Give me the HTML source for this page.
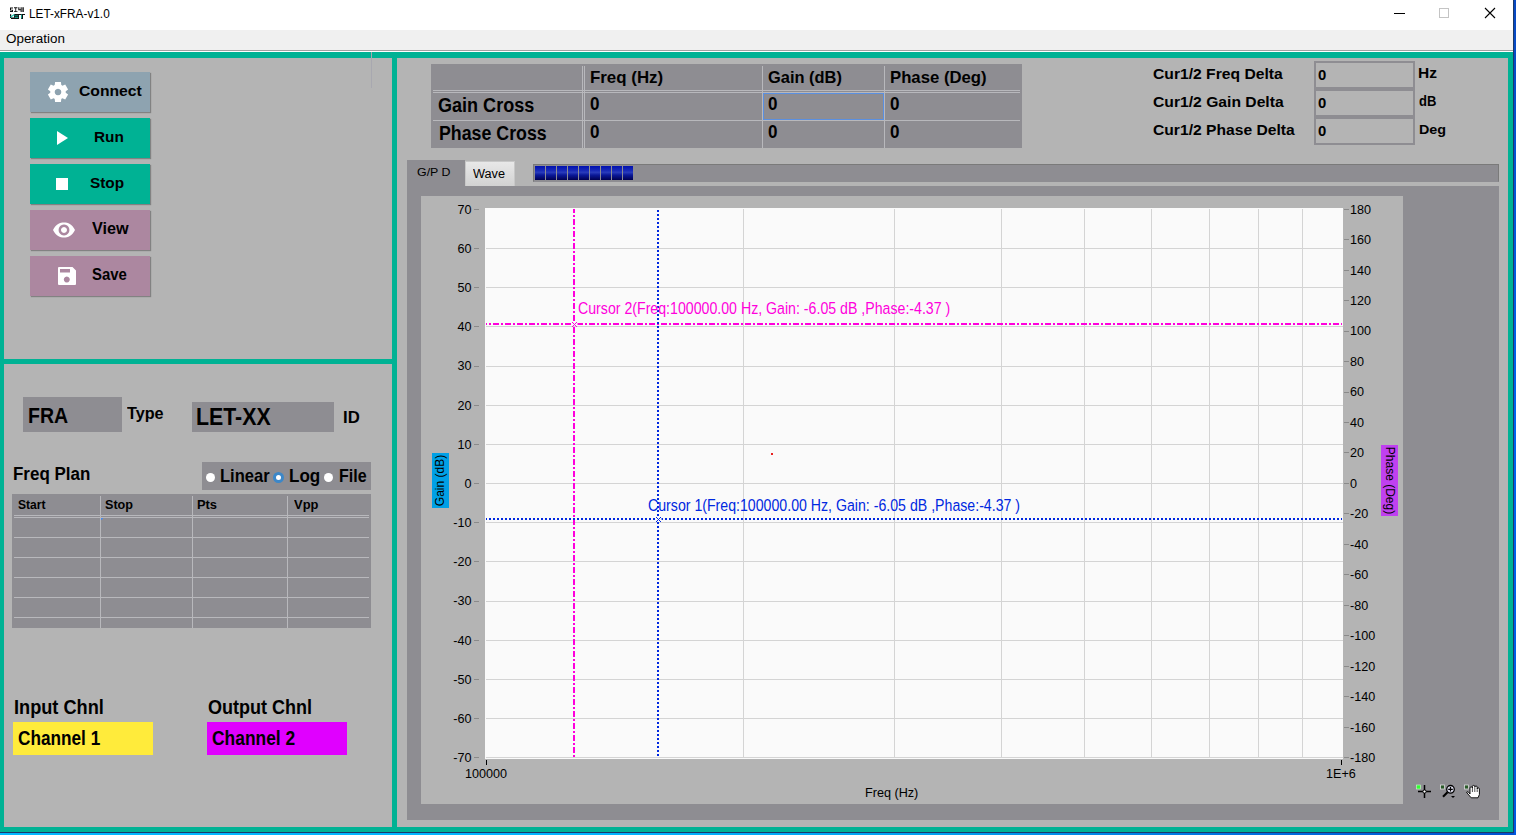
<!DOCTYPE html>
<html><head><meta charset="utf-8"><style>
html,body{margin:0;padding:0;width:1516px;height:835px;overflow:hidden;background:#0a5ad0}
body>div,body>svg{position:absolute}
.t{position:absolute;white-space:pre;line-height:1;font-family:"Liberation Sans",sans-serif;transform-origin:0 0}
svg{position:absolute;overflow:visible}
</style></head><body>
<div style="left:0px;top:0px;width:1516px;height:835px;background:#0a5ad0;"></div>
<div style="left:0px;top:833px;width:1516px;height:2px;background:linear-gradient(to right,#00b8ff 0%,#00b4ff 40%,#00a0f0 62%,#0070e0 82%,#0050d0 100%);"></div>
<div style="left:1514px;top:0px;width:2px;height:835px;background:linear-gradient(#0848c0,#0064f0 50%,#0058e0 100%);"></div>
<div style="left:0px;top:0px;width:1513px;height:30px;background:#ffffff;"></div>
<div style="left:0px;top:30px;width:1513px;height:20px;background:#f0f0f0;"></div>
<div style="left:0px;top:50px;width:1513px;height:1px;background:#a0a0a0;"></div>
<div style="left:0px;top:51px;width:1513px;height:1px;background:#ffffff;"></div>
<div style="left:1513px;top:0px;width:1px;height:833px;background:#1a3a6a;"></div>
<div style="left:0px;top:832px;width:1514px;height:1px;background:#1a3a6a;"></div>
<div style="left:0px;top:52px;width:1513px;height:780px;background:#00b294;"></div>
<div style="left:4px;top:58px;width:388px;height:301px;background:#b4b4b4;"></div>
<div style="left:4px;top:364px;width:388px;height:463px;background:#b4b4b4;"></div>
<div style="left:397px;top:58px;width:1111px;height:769px;background:#b4b4b4;"></div>
<svg style="left:9px;top:6px" width="17" height="14" viewBox="0 0 17 14">
<path d="M1 1.5h3v1h-2v1.2h2v2.3H1v-1h2v-0.6H1zM5 1.2h3.4v1H7.2v3h1.3v0.8H5V5.2h1.3v-3H5zM9.3 1.2h1.1v2h1.2v-2h1.1v4.8h-1.1V4.2h-2.3zM13.4 1.2h1.4v4.8h-1.4z" fill="#111"/>
<path d="M5 8h11v1.1H5zM1 8.3h1.2v3.6H1zM2 11.6h8v1.5H2zM5 9h5v2.6H5zM12 8.5h2v4.6h-2z" fill="#111"/>
<path d="M1 10.8L5 8.1l0.9 0.7-3.8 2.8z" fill="#1fc8b0"/><path d="M5.6 9.6h3.6v0.7H5.6zM5.6 10.9h3.6v0.8H5.6zM12 8.5h0.8v4H12z" fill="#1fc8b0"/>
</svg>
<div class="t" id="t0" style="left:29.23px;top:6.75px;font-size:13.52px;font-weight:400;color:#000;transform:scaleX(0.8736);">LET-xFRA-v1.0</div>
<div style="left:1394px;top:13px;width:11px;height:1px;background:#000;"></div>
<div style="left:1439px;top:8px;width:10px;height:10px;background:transparent;border:1px solid #c4c4c4;box-sizing:border-box"></div>
<svg style="left:1484px;top:7px" width="12" height="12" viewBox="0 0 12 12"><path d="M1 1L11 11M11 1L1 11" stroke="#000" stroke-width="1.1"/></svg>
<div class="t" id="t1" style="left:6.07px;top:31.80px;font-size:13.23px;font-weight:400;color:#000;transform:scaleX(1.0154);">Operation</div>
<div style="left:371px;top:52px;width:1px;height:36px;background:#a8a8b0;"></div>
<div style="left:30px;top:72px;width:120px;height:40px;background:#8ea3b0;box-shadow:1px 1px 1px rgba(0,0,0,0.28)"></div>
<svg style="left:48px;top:82px" width="20" height="20" viewBox="0 0 20 20"><path fill="#fff" fill-rule="evenodd" d="M13.30 3.00L12.90 0.00L7.10 -0.00L6.70 3.00A7.0 7.0 0 0 0 5.59 3.64L2.79 2.49L-0.11 7.51L2.29 9.36A7.0 7.0 0 0 0 2.29 10.64L-0.11 12.49L2.79 17.51L5.59 16.36A7.0 7.0 0 0 0 6.70 17.00L7.10 20.00L12.90 20.00L13.30 17.00A7.0 7.0 0 0 0 14.41 16.36L17.21 17.51L20.11 12.49L17.71 10.64A7.0 7.0 0 0 0 17.71 9.36L20.11 7.51L17.21 2.49L14.41 3.64A7.0 7.0 0 0 0 13.30 3.00ZM10 6.7a3.3 3.3 0 1 0 0.001 0z"/></svg>
<div style="left:30px;top:118px;width:120px;height:40px;background:#00b294;box-shadow:1px 1px 1px rgba(0,0,0,0.28)"></div>
<svg style="left:57px;top:131px" width="12" height="15" viewBox="0 0 12 15"><path d="M0 0L11 7L0 14z" fill="#fff"/></svg>
<div style="left:30px;top:164px;width:120px;height:40px;background:#00b294;box-shadow:1px 1px 1px rgba(0,0,0,0.28)"></div>
<div style="left:56px;top:178px;width:12px;height:12px;background:#fff"></div>
<div style="left:30px;top:210px;width:120px;height:40px;background:#ac87a0;box-shadow:1px 1px 1px rgba(0,0,0,0.28)"></div>
<svg style="left:53px;top:222px" width="22" height="16" viewBox="0 0 22 16"><path fill="#fff" fill-rule="evenodd" d="M0 8C3 2 7 0.5 11 0.5S19 2 22 8C19 14 15 15.5 11 15.5S3 14 0 8z M11 2.6a5.4 5.4 0 1 0 0.01 0z M11 5a3 3 0 1 1-0.01 0z"/></svg>
<div style="left:30px;top:256px;width:120px;height:40px;background:#ac87a0;box-shadow:1px 1px 1px rgba(0,0,0,0.28)"></div>
<svg style="left:58px;top:267px" width="18" height="18" viewBox="0 0 18 18"><path fill="#fff" fill-rule="evenodd" d="M1 0H14.5L18 3.5V17a1 1 0 0 1-1 1H1a1 1 0 0 1-1-1V1a1 1 0 0 1 1-1z M2 2V5.5H12V2z M8.8 9.6a3 3 0 1 0 0.01 0z"/></svg>
<div class="t" id="t2" style="left:78.61px;top:82.75px;font-size:15.41px;font-weight:700;color:#000;transform:scaleX(1.0185);">Connect</div>
<div class="t" id="t3" style="left:93.84px;top:128.83px;font-size:15.55px;font-weight:700;color:#000;transform:scaleX(0.9892);">Run</div>
<div class="t" id="t4" style="left:90.46px;top:175.08px;font-size:15.26px;font-weight:700;color:#000;transform:scaleX(1.0070);">Stop</div>
<div class="t" id="t5" style="left:92.30px;top:220.87px;font-size:16.57px;font-weight:700;color:#000;transform:scaleX(0.9782);">View</div>
<div class="t" id="t6" style="left:92.17px;top:267.36px;font-size:15.99px;font-weight:700;color:#000;transform:scaleX(0.9321);">Save</div>
<div style="left:23px;top:397px;width:99px;height:35px;background:#8e8d92;"></div>
<div class="t" id="t7" style="left:28.38px;top:405.42px;font-size:21.95px;font-weight:700;color:#000;transform:scaleX(0.8911);">FRA</div>
<div class="t" id="t8" style="left:127.10px;top:405.09px;font-size:16.42px;font-weight:700;color:#000;transform:scaleX(0.9862);">Type</div>
<div style="left:192px;top:402px;width:142px;height:30px;background:#8e8d92;"></div>
<div class="t" id="t9" style="left:196.47px;top:406.21px;font-size:23.26px;font-weight:700;color:#000;transform:scaleX(0.9167);">LET-XX</div>
<div class="t" id="t10" style="left:342.95px;top:410.46px;font-size:15.99px;font-weight:700;color:#000;transform:scaleX(1.0461);">ID</div>
<div class="t" id="t11" style="left:12.84px;top:466.13px;font-size:17.44px;font-weight:700;color:#000;transform:scaleX(0.9723);">Freq Plan</div>
<div style="left:202px;top:462px;width:169px;height:28px;background:#8e8d92;"></div>
<div style="left:205.6px;top:472.7px;width:9.8px;height:9.6px;border-radius:50%;background:#fff"></div>
<div style="left:272.7px;top:471.8px;width:11.3px;height:11.3px;border-radius:50%;background:#fff;border:3.2px solid #3c87c8;box-sizing:border-box"></div>
<div style="left:323.9px;top:472.7px;width:9.6px;height:9.6px;border-radius:50%;background:#fff"></div>
<div class="t" id="t12" style="left:220.07px;top:466.84px;font-size:18.02px;font-weight:700;color:#000;transform:scaleX(0.9183);">Linear</div>
<div class="t" id="t13" style="left:288.93px;top:466.84px;font-size:18.02px;font-weight:700;color:#000;transform:scaleX(0.9464);">Log</div>
<div class="t" id="t14" style="left:338.90px;top:466.84px;font-size:18.02px;font-weight:700;color:#000;transform:scaleX(0.8889);">File</div>
<div style="left:12px;top:494px;width:359px;height:134px;background:#8e8d92;"></div>
<div style="left:100px;top:496px;width:1px;height:132px;background:#b8b8bc;"></div>
<div style="left:192px;top:496px;width:1px;height:132px;background:#b8b8bc;"></div>
<div style="left:287px;top:496px;width:1px;height:132px;background:#b8b8bc;"></div>
<div style="left:14px;top:515px;width:355px;height:1px;background:#b8b8bc;"></div>
<div style="left:14px;top:517px;width:355px;height:1px;background:#b8b8bc;"></div>
<div style="left:14px;top:537px;width:355px;height:1px;background:#b8b8bc;"></div>
<div style="left:14px;top:557px;width:355px;height:1px;background:#b8b8bc;"></div>
<div style="left:14px;top:577px;width:355px;height:1px;background:#b8b8bc;"></div>
<div style="left:14px;top:597px;width:355px;height:1px;background:#b8b8bc;"></div>
<div style="left:14px;top:617px;width:355px;height:1px;background:#b8b8bc;"></div>
<div style="left:101px;top:518px;width:2px;height:1px;background:#4a8ae8;"></div>
<div style="left:101px;top:518px;width:1px;height:2px;background:#4a8ae8;"></div>
<div class="t" id="t15" style="left:18.36px;top:499.49px;font-size:12.65px;font-weight:700;color:#000;transform:scaleX(0.9562);">Start</div>
<div class="t" id="t16" style="left:105.40px;top:499.49px;font-size:12.65px;font-weight:700;color:#000;transform:scaleX(0.9970);">Stop</div>
<div class="t" id="t17" style="left:197.25px;top:498.62px;font-size:12.50px;font-weight:700;color:#000;transform:scaleX(1.0295);">Pts</div>
<div class="t" id="t18" style="left:294.20px;top:498.62px;font-size:12.50px;font-weight:700;color:#000;transform:scaleX(1.0345);">Vpp</div>
<div class="t" id="t19" style="left:13.56px;top:698.31px;font-size:19.48px;font-weight:700;color:#000;transform:scaleX(0.9339);">Input Chnl</div>
<div style="left:13px;top:722px;width:140px;height:33px;background:#ffeb3b;"></div>
<div class="t" id="t20" style="left:18.16px;top:727.89px;font-size:20.20px;font-weight:700;color:#000;transform:scaleX(0.8521);">Channel 1</div>
<div class="t" id="t21" style="left:208.34px;top:698.31px;font-size:19.48px;font-weight:700;color:#000;transform:scaleX(0.9256);">Output Chnl</div>
<div style="left:207px;top:722px;width:140px;height:33px;background:#e000ff;"></div>
<div class="t" id="t22" style="left:212.36px;top:727.89px;font-size:20.20px;font-weight:700;color:#000;transform:scaleX(0.8625);">Channel 2</div>
<div style="left:431px;top:64px;width:591px;height:84px;background:#8e8d92;"></div>
<div style="left:582px;top:66px;width:1px;height:82px;background:#b8b8bc;"></div>
<div style="left:584px;top:66px;width:1px;height:82px;background:#b8b8bc;"></div>
<div style="left:762px;top:66px;width:1px;height:82px;background:#b8b8bc;"></div>
<div style="left:884px;top:66px;width:1px;height:82px;background:#b8b8bc;"></div>
<div style="left:433px;top:90px;width:587px;height:1px;background:#b8b8bc;"></div>
<div style="left:433px;top:92px;width:587px;height:1px;background:#b8b8bc;"></div>
<div style="left:433px;top:120px;width:587px;height:1px;background:#b8b8bc;"></div>
<div style="left:763px;top:93px;width:121px;height:27px;background:transparent;border:1px solid #5a8fe0;box-sizing:border-box"></div>
<div class="t" id="t23" style="left:589.64px;top:69.38px;font-size:17.15px;font-weight:700;color:#000;transform:scaleX(0.9845);">Freq (Hz)</div>
<div class="t" id="t24" style="left:768.19px;top:69.38px;font-size:17.15px;font-weight:700;color:#000;transform:scaleX(0.9577);">Gain (dB)</div>
<div class="t" id="t25" style="left:889.55px;top:69.38px;font-size:17.15px;font-weight:700;color:#000;transform:scaleX(0.9750);">Phase (Deg)</div>
<div class="t" id="t26" style="left:438.44px;top:94.65px;font-size:20.49px;font-weight:700;color:#000;transform:scaleX(0.8807);">Gain Cross</div>
<div class="t" id="t27" style="left:438.79px;top:124.10px;font-size:19.84px;font-weight:700;color:#000;transform:scaleX(0.8962);">Phase Cross</div>
<div class="t" id="t28" style="left:590.47px;top:96.13px;font-size:17.44px;font-weight:700;color:#000;transform:scaleX(0.9765);">0</div>
<div class="t" id="t29" style="left:590.47px;top:124.23px;font-size:17.44px;font-weight:700;color:#000;transform:scaleX(0.9765);">0</div>
<div class="t" id="t30" style="left:768.17px;top:96.13px;font-size:17.44px;font-weight:700;color:#000;transform:scaleX(0.9765);">0</div>
<div class="t" id="t31" style="left:768.17px;top:124.23px;font-size:17.44px;font-weight:700;color:#000;transform:scaleX(0.9765);">0</div>
<div class="t" id="t32" style="left:890.07px;top:96.13px;font-size:17.44px;font-weight:700;color:#000;transform:scaleX(0.9765);">0</div>
<div class="t" id="t33" style="left:890.07px;top:124.23px;font-size:17.44px;font-weight:700;color:#000;transform:scaleX(0.9765);">0</div>
<div style="left:1314px;top:61px;width:101px;height:28px;background:#b4b4b4;border:2px solid #8e8d92;box-sizing:border-box"></div>
<div style="left:1314px;top:89px;width:101px;height:28px;background:#b4b4b4;border:2px solid #8e8d92;box-sizing:border-box"></div>
<div style="left:1314px;top:117px;width:101px;height:28px;background:#b4b4b4;border:2px solid #8e8d92;box-sizing:border-box"></div>
<div class="t" id="t34" style="left:1152.66px;top:65.95px;font-size:15.41px;font-weight:700;color:#000;transform:scaleX(1.0166);">Cur1/2 Freq Delta</div>
<div class="t" id="t35" style="left:1152.66px;top:94.43px;font-size:15.55px;font-weight:700;color:#000;transform:scaleX(1.0081);">Cur1/2 Gain Delta</div>
<div class="t" id="t36" style="left:1152.71px;top:122.43px;font-size:15.55px;font-weight:700;color:#000;transform:scaleX(1.0063);">Cur1/2 Phase Delta</div>
<div class="t" id="t37" style="left:1318.34px;top:68.49px;font-size:14.54px;font-weight:700;color:#000;transform:scaleX(1.0227);">0</div>
<div class="t" id="t38" style="left:1318.34px;top:96.29px;font-size:14.54px;font-weight:700;color:#000;transform:scaleX(1.0227);">0</div>
<div class="t" id="t39" style="left:1318.34px;top:123.59px;font-size:14.54px;font-weight:700;color:#000;transform:scaleX(1.0227);">0</div>
<div class="t" id="t40" style="left:1418.18px;top:65.94px;font-size:14.24px;font-weight:700;color:#000;transform:scaleX(1.0887);">Hz</div>
<div class="t" id="t41" style="left:1419.29px;top:93.74px;font-size:14.24px;font-weight:700;color:#000;transform:scaleX(0.9142);">dB</div>
<div class="t" id="t42" style="left:1418.80px;top:123.25px;font-size:13.52px;font-weight:700;color:#000;transform:scaleX(1.0618);">Deg</div>
<div style="left:407px;top:160px;width:58px;height:26px;background:#8e8d92;"></div>
<div style="left:465px;top:161px;width:50px;height:25px;background:linear-gradient(#e8e8e8,#d2d2d2);border:1px solid #c8c8c8;border-bottom:none;box-sizing:border-box"></div>
<div class="t" id="t43" style="left:417.02px;top:165.75px;font-size:11.63px;font-weight:400;color:#000;transform:scaleX(1.0648);">G/P D</div>
<div class="t" id="t44" style="left:472.80px;top:166.60px;font-size:13.23px;font-weight:400;color:#000;transform:scaleX(0.9609);">Wave</div>
<div style="left:533px;top:164px;width:966px;height:18px;background:#8e8d92;border:1px solid #7a7a7a;border-bottom-color:#8e8d92;box-sizing:border-box"></div>
<div style="left:535px;top:166px;width:10px;height:14px;background:linear-gradient(#0010b0 0%,#1a2cb8 35%,#2a3cbc 45%,#0a1898 65%,#000050 100%);"></div>
<div style="left:546px;top:166px;width:10px;height:14px;background:linear-gradient(#0010b0 0%,#1a2cb8 35%,#2a3cbc 45%,#0a1898 65%,#000050 100%);"></div>
<div style="left:557px;top:166px;width:10px;height:14px;background:linear-gradient(#0010b0 0%,#1a2cb8 35%,#2a3cbc 45%,#0a1898 65%,#000050 100%);"></div>
<div style="left:568px;top:166px;width:10px;height:14px;background:linear-gradient(#0010b0 0%,#1a2cb8 35%,#2a3cbc 45%,#0a1898 65%,#000050 100%);"></div>
<div style="left:579px;top:166px;width:10px;height:14px;background:linear-gradient(#0010b0 0%,#1a2cb8 35%,#2a3cbc 45%,#0a1898 65%,#000050 100%);"></div>
<div style="left:590px;top:166px;width:10px;height:14px;background:linear-gradient(#0010b0 0%,#1a2cb8 35%,#2a3cbc 45%,#0a1898 65%,#000050 100%);"></div>
<div style="left:601px;top:166px;width:10px;height:14px;background:linear-gradient(#0010b0 0%,#1a2cb8 35%,#2a3cbc 45%,#0a1898 65%,#000050 100%);"></div>
<div style="left:612px;top:166px;width:10px;height:14px;background:linear-gradient(#0010b0 0%,#1a2cb8 35%,#2a3cbc 45%,#0a1898 65%,#000050 100%);"></div>
<div style="left:623px;top:166px;width:10px;height:14px;background:linear-gradient(#0010b0 0%,#1a2cb8 35%,#2a3cbc 45%,#0a1898 65%,#000050 100%);"></div>
<div style="left:407px;top:186px;width:1092px;height:634px;background:#8e8d92;"></div>
<div style="left:421px;top:196px;width:982px;height:608px;background:#b4b4b4;"></div>
<div style="left:485px;top:208px;width:858px;height:551px;background:#fafafa;"></div>
<div style="left:743px;top:209px;width:1px;height:549px;background:#d4d4d4;"></div>
<div style="left:894px;top:209px;width:1px;height:549px;background:#d4d4d4;"></div>
<div style="left:1001px;top:209px;width:1px;height:549px;background:#d4d4d4;"></div>
<div style="left:1084px;top:209px;width:1px;height:549px;background:#d4d4d4;"></div>
<div style="left:1151px;top:209px;width:1px;height:549px;background:#d4d4d4;"></div>
<div style="left:1209px;top:209px;width:1px;height:549px;background:#d4d4d4;"></div>
<div style="left:1258px;top:209px;width:1px;height:549px;background:#d4d4d4;"></div>
<div style="left:1302px;top:209px;width:1px;height:549px;background:#d4d4d4;"></div>
<div style="left:486px;top:248px;width:857px;height:1px;background:#d4d4d4;"></div>
<div style="left:486px;top:287px;width:857px;height:1px;background:#d4d4d4;"></div>
<div style="left:486px;top:326px;width:857px;height:1px;background:#d4d4d4;"></div>
<div style="left:486px;top:366px;width:857px;height:1px;background:#d4d4d4;"></div>
<div style="left:486px;top:405px;width:857px;height:1px;background:#d4d4d4;"></div>
<div style="left:486px;top:444px;width:857px;height:1px;background:#d4d4d4;"></div>
<div style="left:486px;top:483px;width:857px;height:1px;background:#d4d4d4;"></div>
<div style="left:486px;top:522px;width:857px;height:1px;background:#d4d4d4;"></div>
<div style="left:486px;top:561px;width:857px;height:1px;background:#d4d4d4;"></div>
<div style="left:486px;top:601px;width:857px;height:1px;background:#d4d4d4;"></div>
<div style="left:486px;top:640px;width:857px;height:1px;background:#d4d4d4;"></div>
<div style="left:486px;top:679px;width:857px;height:1px;background:#d4d4d4;"></div>
<div style="left:486px;top:718px;width:857px;height:1px;background:#d4d4d4;"></div>
<div style="left:486px;top:757px;width:857px;height:1px;background:#d4d4d4;"></div>
<div style="left:474px;top:209px;width:5px;height:1px;background:#8a8a8a;"></div>
<div class="t" style="right:1044.5px;top:203.60px;font-size:12.6px;font-weight:400;color:#000;">70</div>
<div style="left:474px;top:248px;width:5px;height:1px;background:#8a8a8a;"></div>
<div class="t" style="right:1044.5px;top:242.78px;font-size:12.6px;font-weight:400;color:#000;">60</div>
<div style="left:474px;top:287px;width:5px;height:1px;background:#8a8a8a;"></div>
<div class="t" style="right:1044.5px;top:281.96px;font-size:12.6px;font-weight:400;color:#000;">50</div>
<div style="left:474px;top:326px;width:5px;height:1px;background:#8a8a8a;"></div>
<div class="t" style="right:1044.5px;top:321.14px;font-size:12.6px;font-weight:400;color:#000;">40</div>
<div style="left:474px;top:366px;width:5px;height:1px;background:#8a8a8a;"></div>
<div class="t" style="right:1044.5px;top:360.32px;font-size:12.6px;font-weight:400;color:#000;">30</div>
<div style="left:474px;top:405px;width:5px;height:1px;background:#8a8a8a;"></div>
<div class="t" style="right:1044.5px;top:399.50px;font-size:12.6px;font-weight:400;color:#000;">20</div>
<div style="left:474px;top:444px;width:5px;height:1px;background:#8a8a8a;"></div>
<div class="t" style="right:1044.5px;top:438.68px;font-size:12.6px;font-weight:400;color:#000;">10</div>
<div style="left:474px;top:483px;width:5px;height:1px;background:#8a8a8a;"></div>
<div class="t" style="right:1044.5px;top:477.86px;font-size:12.6px;font-weight:400;color:#000;">0</div>
<div style="left:474px;top:522px;width:5px;height:1px;background:#8a8a8a;"></div>
<div class="t" style="right:1044.5px;top:517.04px;font-size:12.6px;font-weight:400;color:#000;">-10</div>
<div style="left:474px;top:561px;width:5px;height:1px;background:#8a8a8a;"></div>
<div class="t" style="right:1044.5px;top:556.22px;font-size:12.6px;font-weight:400;color:#000;">-20</div>
<div style="left:474px;top:601px;width:5px;height:1px;background:#8a8a8a;"></div>
<div class="t" style="right:1044.5px;top:595.40px;font-size:12.6px;font-weight:400;color:#000;">-30</div>
<div style="left:474px;top:640px;width:5px;height:1px;background:#8a8a8a;"></div>
<div class="t" style="right:1044.5px;top:634.58px;font-size:12.6px;font-weight:400;color:#000;">-40</div>
<div style="left:474px;top:679px;width:5px;height:1px;background:#8a8a8a;"></div>
<div class="t" style="right:1044.5px;top:673.76px;font-size:12.6px;font-weight:400;color:#000;">-50</div>
<div style="left:474px;top:718px;width:5px;height:1px;background:#8a8a8a;"></div>
<div class="t" style="right:1044.5px;top:712.94px;font-size:12.6px;font-weight:400;color:#000;">-60</div>
<div style="left:474px;top:757px;width:5px;height:1px;background:#8a8a8a;"></div>
<div class="t" style="right:1044.5px;top:752.12px;font-size:12.6px;font-weight:400;color:#000;">-70</div>
<div style="left:1344px;top:209px;width:5px;height:1px;background:#8a8a8a;"></div>
<div class="t" style="left:1350px;top:203.60px;font-size:12.6px;font-weight:400;color:#000;">180</div>
<div style="left:1344px;top:239px;width:5px;height:1px;background:#8a8a8a;"></div>
<div class="t" style="left:1350px;top:234.07px;font-size:12.6px;font-weight:400;color:#000;">160</div>
<div style="left:1344px;top:270px;width:5px;height:1px;background:#8a8a8a;"></div>
<div class="t" style="left:1350px;top:264.54px;font-size:12.6px;font-weight:400;color:#000;">140</div>
<div style="left:1344px;top:300px;width:5px;height:1px;background:#8a8a8a;"></div>
<div class="t" style="left:1350px;top:295.02px;font-size:12.6px;font-weight:400;color:#000;">120</div>
<div style="left:1344px;top:331px;width:5px;height:1px;background:#8a8a8a;"></div>
<div class="t" style="left:1350px;top:325.49px;font-size:12.6px;font-weight:400;color:#000;">100</div>
<div style="left:1344px;top:361px;width:5px;height:1px;background:#8a8a8a;"></div>
<div class="t" style="left:1350px;top:355.96px;font-size:12.6px;font-weight:400;color:#000;">80</div>
<div style="left:1344px;top:392px;width:5px;height:1px;background:#8a8a8a;"></div>
<div class="t" style="left:1350px;top:386.43px;font-size:12.6px;font-weight:400;color:#000;">60</div>
<div style="left:1344px;top:422px;width:5px;height:1px;background:#8a8a8a;"></div>
<div class="t" style="left:1350px;top:416.91px;font-size:12.6px;font-weight:400;color:#000;">40</div>
<div style="left:1344px;top:452px;width:5px;height:1px;background:#8a8a8a;"></div>
<div class="t" style="left:1350px;top:447.38px;font-size:12.6px;font-weight:400;color:#000;">20</div>
<div style="left:1344px;top:483px;width:5px;height:1px;background:#8a8a8a;"></div>
<div class="t" style="left:1350px;top:477.85px;font-size:12.6px;font-weight:400;color:#000;">0</div>
<div style="left:1344px;top:513px;width:5px;height:1px;background:#8a8a8a;"></div>
<div class="t" style="left:1350px;top:508.32px;font-size:12.6px;font-weight:400;color:#000;">-20</div>
<div style="left:1344px;top:544px;width:5px;height:1px;background:#8a8a8a;"></div>
<div class="t" style="left:1350px;top:538.79px;font-size:12.6px;font-weight:400;color:#000;">-40</div>
<div style="left:1344px;top:574px;width:5px;height:1px;background:#8a8a8a;"></div>
<div class="t" style="left:1350px;top:569.27px;font-size:12.6px;font-weight:400;color:#000;">-60</div>
<div style="left:1344px;top:605px;width:5px;height:1px;background:#8a8a8a;"></div>
<div class="t" style="left:1350px;top:599.74px;font-size:12.6px;font-weight:400;color:#000;">-80</div>
<div style="left:1344px;top:635px;width:5px;height:1px;background:#8a8a8a;"></div>
<div class="t" style="left:1350px;top:630.21px;font-size:12.6px;font-weight:400;color:#000;">-100</div>
<div style="left:1344px;top:666px;width:5px;height:1px;background:#8a8a8a;"></div>
<div class="t" style="left:1350px;top:660.68px;font-size:12.6px;font-weight:400;color:#000;">-120</div>
<div style="left:1344px;top:696px;width:5px;height:1px;background:#8a8a8a;"></div>
<div class="t" style="left:1350px;top:691.16px;font-size:12.6px;font-weight:400;color:#000;">-140</div>
<div style="left:1344px;top:727px;width:5px;height:1px;background:#8a8a8a;"></div>
<div class="t" style="left:1350px;top:721.63px;font-size:12.6px;font-weight:400;color:#000;">-160</div>
<div style="left:1344px;top:757px;width:5px;height:1px;background:#8a8a8a;"></div>
<div class="t" style="left:1350px;top:752.10px;font-size:12.6px;font-weight:400;color:#000;">-180</div>
<div style="left:486px;top:760px;width:1px;height:5px;background:#000;"></div>
<div style="left:1341px;top:760px;width:1px;height:5px;background:#000;"></div>
<div class="t" style="left:286px;width:400px;text-align:center;top:768.00px;font-size:12.6px;font-weight:400;color:#000;">100000</div>
<div class="t" style="left:1141px;width:400px;text-align:center;top:768.00px;font-size:12.6px;font-weight:400;color:#000;">1E+6</div>
<div class="t" id="t45" style="left:865.06px;top:785.68px;font-size:13.37px;font-weight:400;color:#000;transform:scaleX(0.9448);">Freq (Hz)</div>
<div style="left:432px;top:453px;width:17px;height:55px;background:#00a0e6"></div>
<div class="t" style="left:413px;top:474px;width:55px;height:13px;line-height:13px;font-size:12px;text-align:center;transform-origin:50% 50%;transform:rotate(-90deg)">Gain (dB)</div>
<div style="left:1381px;top:445px;width:17px;height:71px;background:#c040f0"></div>
<div class="t" style="left:1354px;top:474px;width:71px;height:13px;line-height:13px;font-size:12px;text-align:center;transform-origin:50% 50%;transform:rotate(90deg)">Phase (Deg)</div>
<svg style="left:0;top:0" width="1516" height="835"><line x1="574" y1="209" x2="574" y2="758" stroke="#ff00dc" stroke-width="2" stroke-dasharray="6 2 2 2" stroke-dashoffset="2"/><line x1="486" y1="324" x2="1342" y2="324" stroke="#ff00dc" stroke-width="2" stroke-dasharray="6 2 2 2" stroke-dashoffset="5"/><line x1="658" y1="209" x2="658" y2="758" stroke="#0028e0" stroke-width="2" stroke-dasharray="2 2" stroke-dashoffset="3"/><line x1="486" y1="519" x2="1342" y2="519" stroke="#0028e0" stroke-width="2" stroke-dasharray="2 2" stroke-dashoffset="1"/><rect x="571.5" y="321.5" width="6" height="4.5" fill="#fafafa"/><rect x="655.5" y="516" width="6" height="6" fill="#fafafa"/><path d="M572 322l5 5M577 322l-5 5" stroke="#ff00dc" stroke-width="1" shape-rendering="crispEdges"/><path d="M656 517l5 5M661 517l-5 5" stroke="#0028e0" stroke-width="1" shape-rendering="crispEdges"/><rect x="771" y="453" width="2" height="2" fill="#e82020"/></svg>
<div class="t" id="t46" style="left:578.34px;top:300.34px;font-size:16.13px;font-weight:400;color:#ff00dc;transform:scaleX(0.8789);">Cursor 2(Freq:100000.00 Hz, Gain: -6.05 dB ,Phase:-4.37 )</div>
<div class="t" id="t47" style="left:647.74px;top:497.34px;font-size:16.13px;font-weight:400;color:#0028e0;transform:scaleX(0.8784);">Cursor 1(Freq:100000.00 Hz, Gain: -6.05 dB ,Phase:-4.37 )</div>
<svg style="left:1410px;top:780px" width="75" height="22" viewBox="0 0 75 22">
<rect x="6.5" y="5" width="4" height="4" fill="#3f3" stroke="#cfc" stroke-width="0.6"/>
<path d="M14.5 5v13M8 11.5h13" stroke="#000" stroke-width="1.5"/><circle cx="14.5" cy="11.5" r="1.6" fill="#fff" stroke="#000" stroke-width="1"/>
<rect x="30.5" y="5" width="4" height="4" fill="#2a5a2a" stroke="#ddd" stroke-width="0.8"/>
<circle cx="40.5" cy="9.3" r="3.8" fill="#dde" stroke="#000" stroke-width="1.3"/><path d="M40.5 7v4.6M38.2 9.3h4.6" stroke="#000" stroke-width="1.2"/>
<path d="M37.5 12.3l-4.5 4.5" stroke="#000" stroke-width="2.2"/><path d="M41 16h4l-2 2z" fill="#000"/>
<rect x="54.5" y="5" width="4" height="4" fill="#2a5a2a" stroke="#ddd" stroke-width="0.8"/>
<path d="M56.5 12.3l1.6-0.6L60 14V8a1.2 1.2 0 0 1 2.4 0V6.6a1.2 1.2 0 0 1 2.4 0V7.2a1.2 1.2 0 0 1 2.4 0V9a1.1 1.1 0 0 1 2.2 0V14.5L68 17.8H61.2z" fill="#fff" stroke="#000" stroke-width="0.9" stroke-linejoin="round"/><path d="M62.4 12V8M64.8 12V7.5M67.2 12V9.2" stroke="#000" stroke-width="0.7"/>
</svg>
</body></html>
